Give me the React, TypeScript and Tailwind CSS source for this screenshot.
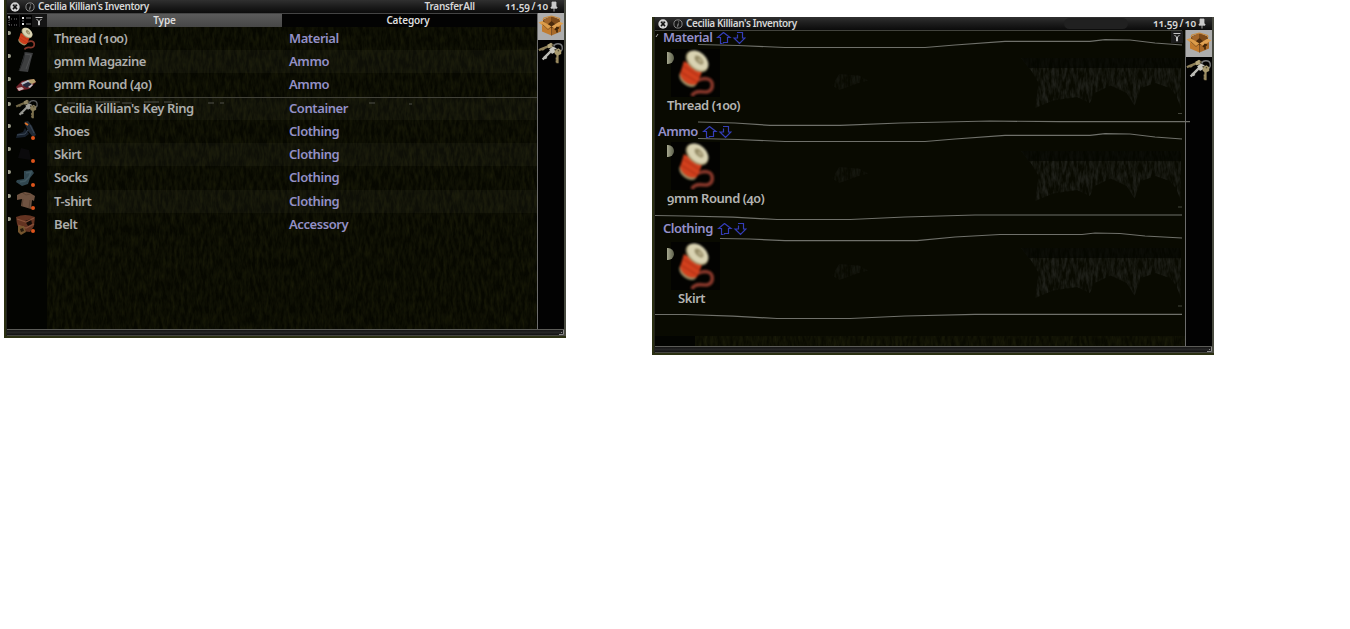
import type { ReactNode } from "react";

const rows = [
  { name: "Thread (100)", category: "Material", icon: "thread", worn: false },
  { name: "9mm Magazine", category: "Ammo", icon: "magazine", worn: false },
  { name: "9mm Round (40)", category: "Ammo", icon: "round", worn: false },
  { name: "Cecilia Killian's Key Ring", category: "Container", icon: "keys", worn: false },
  { name: "Shoes", category: "Clothing", icon: "shoes", worn: true },
  { name: "Skirt", category: "Clothing", icon: "skirt", worn: true },
  { name: "Socks", category: "Clothing", icon: "socks", worn: true },
  { name: "T-shirt", category: "Clothing", icon: "shirt", worn: true },
  { name: "Belt", category: "Accessory", icon: "belt", worn: true },
];

/* Vertical dark-green streaks, like grass seen through the panel. */
function Grass({ id, color }: { id: string; color: "olive" | "grey" }) {
  return (
    <svg className="pointer-events-none absolute inset-0 h-full w-full" aria-hidden="true">
      <filter id={id} x="0" y="0" width="100%" height="100%" colorInterpolationFilters="sRGB">
        <feTurbulence type="fractalNoise" baseFrequency="0.32 0.09" numOctaves="3" seed="7" />
        <feColorMatrix
          values={
            color === "olive"
              ? "0 0 0 0 0.1  0 0 0 0 0.105  0 0 0 0 0.03  1.7 0 0 0 -0.5"
              : "0 0 0 0 0.12  0 0 0 0 0.125  0 0 0 0 0.1  2.4 0 0 0 -0.8"
          }
        />
      </filter>
      <rect width="100%" height="100%" filter={`url(#${id})`} />
    </svg>
  );
}

function Thread({ className }: { className: string }) {
  return (
    <svg viewBox="0 0 48 48" className={className}>
      <path d="M20 47c2-5 7-5 13-4 6 0 8-4 7-9-1-4-6-5-10-4-4 2-7 2-9 0" fill="none" stroke="#87372a" strokeWidth="3.6" />
      <ellipse cx="16" cy="30" rx="10" ry="6.5" transform="rotate(38 16 30)" fill="#9c8f66" />
      <path d="M12 12 30 23l-5 12c-6 3-16-3-17-10z" fill="#d2401d" />
      <path d="m9 23 16 10M11 17l17 11" stroke="#b83517" strokeWidth="1.6" />
      <ellipse cx="25" cy="12.5" rx="13" ry="8.5" transform="rotate(42 25 12.5)" fill="#a39870" />
      <ellipse cx="26" cy="11.5" rx="12" ry="8" transform="rotate(42 26 11.5)" fill="#d9d3b2" />
      <ellipse cx="27" cy="11" rx="5.5" ry="3" transform="rotate(46 27 11)" fill="#948a65" />
      <ellipse cx="28" cy="11.5" rx="2.6" ry="1.3" transform="rotate(46 28 11.5)" fill="#b9b08a" />
    </svg>
  );
}

function Keys({ className }: { className: string }) {
  return (
    <svg viewBox="0 0 28 24" className={className}>
      <path d="M17 5c1-4 8-4 9 0 .5 2 0 4-1 5" fill="none" stroke="#77797a" strokeWidth="1.5" />
      <path d="m13 4-10 4-2 1m4-2 1 2" fill="none" stroke="#8e8059" strokeWidth="2.6" />
      <path d="m10 3 4-2 3 2-2 3-4 1z" fill="#b5a77c" />
      <path d="m15 9-7 7-3 3m2-4 2 3" fill="none" stroke="#bcbcb6" strokeWidth="2.6" />
      <path d="m12 8 4-3 4 2-1 4-4 2z" fill="#c9c8c0" />
      <path d="M21 12v11m0-5h-2m2 3h-2" stroke="#9b8b60" strokeWidth="2.4" />
      <path d="m18 9 4-2 3 2v4l-4 2-3-2z" fill="#a89a6e" />
      <path d="m15 3 1 1m2 4 1 1m3 0v1" stroke="#35311f" strokeWidth="1.4" />
    </svg>
  );
}

function Box() {
  return (
    <svg viewBox="0 0 26 27" className="h-[27px] w-[26px]">
      <path d="m5 7 8.500-4L22 7v5l-8.500 4L5 12z" fill="#4a2a0c" />
      <path d="m5 7 8.500-4v5L9 12z" fill="#a3662a" />
      <path d="M13.500 3 22 7l-4 5-4.500-4z" fill="#7d4a19" />
      <path d="m4 11 9.500 4v7.500L4 18.500z" fill="#c27c2f" />
      <path d="m13.500 15 9.500-4v7.500l-9.500 4z" fill="#a96a28" />
      <path d="M.500 9.500 4.500 8l9 5.500-3.500 3z" fill="#dc9c4a" />
      <path d="m13.500 13.500 8-5 4 2-8.500 5z" fill="#e0a252" />
      <path d="m5 7 1-2 7.500-2M13.500 3l8 2.500.5 2" fill="none" stroke="#c88a3e" strokeWidth="1.2" />
      <path d="M19 19.500v-4.500m-2 2 2-2.500 2 .8" fill="none" stroke="#3f2307" strokeWidth="1.6" />
      <path d="m4.500 11.500 5.500 5 3.500-3v9" fill="none" stroke="#6a3e14" strokeWidth=".7" />
    </svg>
  );
}

function ItemIcon({ kind }: { kind: string }) {
  if (kind === "thread") return <Thread className="h-[23px] w-[23px]" />;
  if (kind === "keys") return <Keys className="h-5 w-7 opacity-80" />;
  return (
    <svg viewBox="0 0 22 22" className="h-[22px] w-[22px]">
      {kind === "magazine" && (
        <>
          <path d="m10 1 8 1-2 7-3 12-9-1 3-10z" fill="#3d3e3f" />
          <path d="m10 3 6 1-2 6-3 8" fill="none" stroke="#505152" />
          <path d="m10 1-2 9-4 10" fill="none" stroke="#252627" />
        </>
      )}
      {kind === "round" && (
        <>
          <path d="m1 13 6-6 12-2 2 3-7 7-11 2z" fill="#6e2028" />
          <path d="m12 6 7-1 2 3-6 3z" fill="#b6a26e" />
          <path d="m6 9 7-3 2 2-7 4z" fill="#b9bac4" />
          <path d="m7 11 6-3 4 2-5 4z" fill="#25283c" />
          <path d="m2 14 5-1 2 2-5 2z" fill="#d3b5b8" />
          <path d="m13 13 4-3 1 1-3 3z" fill="#c9c2c6" />
        </>
      )}
      {kind === "shoes" && (
        <>
          <path d="m9 2 4-1 4 5 4 9-3 2-5-6z" fill="#222b36" />
          <path d="m10 8 4 6-4 3-9 1 1-4 6-2z" fill="#18212c" />
          <path d="m2 15 8-1 3-4m2-5 4 8" fill="none" stroke="#3b4857" />
          <path d="m10 3 3 2" stroke="#df7228" strokeWidth="2" />
        </>
      )}
      {kind === "skirt" && <path d="m6 4 8 2 2 10-13-2z" fill="#0b0a0c" />}
      {kind === "socks" && (
        <>
          <path d="m9 4 8-1 2 3-4 5-2 6-6 2-6-4 1-2 7-1z" fill="#314750" />
          <path d="m11 6 5-1-2 5-4 4-5 1" fill="none" stroke="#425962" strokeWidth="1.5" />
        </>
      )}
      {kind === "shirt" && (
        <>
          <path d="m6 3 4-1 5 1 5 3-1 5-2-1-1 9-10-3 1-7-5 1 0-5z" fill="#6f5341" />
          <path d="m8 3 3 2 4-1M8 9l-1 7m8-6-1 8" fill="none" stroke="#5b4333" />
        </>
      )}
      {kind === "belt" && (
        <>
          <path d="M1 3q9-4 19 0l-1 9-4 6-10-1-3-7z" fill="#633321" />
          <path d="m10 7 6-2 1 5-4 2z" fill="#120b07" />
          <path d="m2 5 9 3 8-4M3 11l8 3 8-4" fill="none" stroke="#87513a" strokeWidth="1.3" />
          <path d="m3 12 6 0 2 6-5 3-3-3z" fill="#75552e" />
          <path d="m5 15 3-1 1 3-3 1z" fill="#261a0c" />
        </>
      )}
    </svg>
  );
}

function Funnel() {
  return (
    <svg viewBox="0 0 12 12" className="h-3 w-3">
      <path d="M2.500 2.500h7M3.500 4l2 2V10h1V6l2-2" fill="none" stroke="#c4c4c4" strokeWidth="1" />
    </svg>
  );
}

function TitleBar({ transfer }: { transfer: boolean }) {
  return (
    <div className="flex h-[13px] items-center bg-linear-to-b from-[#303030] via-[#1c1c1c] to-[#0b0b0b] pl-[3px] text-[10px] leading-[11px] font-semibold tracking-[-0.4px] text-[#d6d6d6]">
      <svg viewBox="0 0 10 10" className="h-[10px] w-[10px]">
        <circle cx="5" cy="5" r="4.7" fill="#d2d2d2" />
        <path d="m3 2.7 4 4.4m0-4.4-4 4.4" stroke="#111" strokeWidth="1.6" />
        <path d="M4.2 2.5h1.6" stroke="#777" />
      </svg>
      <svg viewBox="0 0 10 10" className="ml-[5px] h-[10px] w-[10px]">
        <circle cx="5" cy="5" r="4.1" fill="#161616" stroke="#929292" strokeWidth=".9" />
        <path d="M5.7 2.4v1M5.3 4.4 4.6 7.6" stroke="#a5a5a5" />
      </svg>
      <span className="ml-[3px] whitespace-nowrap">Cecilia Killian's Inventory</span>
      <span className="flex-1" />
      {transfer ? (
        <span className="mr-[30px] tracking-[-0.25px] whitespace-nowrap [word-spacing:-2px]">Transfer All</span>
      ) : (
        <span className="mr-[25px] h-[11px] w-16 rounded-lg bg-[#202020]" />
      )}
      <span className="tracking-[-0.1px] whitespace-nowrap [word-spacing:-1px]">11.59 / 10</span>
      <svg viewBox="0 0 8 11" className="mr-[6px] ml-[2px] h-[11px] w-2">
        <path d="M2 1h4v5H2zM1 6h6v1.2H1zM4 7v3.5" fill="#c9c9c9" stroke="#c9c9c9" strokeWidth=".8" />
      </svg>
    </div>
  );
}

function Sidebar() {
  return (
    <div className="flex w-[27px] shrink-0 flex-col border-l border-[#6c6c6c] bg-[#020202]">
      <div className="bg-[#adadad]">
        <Box />
      </div>
      <div className="pt-px">
        <Keys className="h-6 w-[26px]" />
      </div>
    </div>
  );
}

function Frame({ transfer, children }: { transfer: boolean; children: ReactNode }) {
  return (
    <div className="flex h-[338px] w-[562px] flex-col border-b-2 border-l-2 border-[#2b3012] bg-[#070801]">
      <div className="flex min-h-0 flex-1 flex-col border-r-2 border-l border-r-[#484a40] border-l-[#22231c]">
        <TitleBar transfer={transfer} />
        <div className="flex min-h-0 flex-1">
          {children}
          <Sidebar />
        </div>
        <div className="flex h-[7px] justify-end border-t border-b border-t-[#5b5b57] border-b-[#44443f] bg-linear-to-b from-[#151515] via-[#252525] to-[#111]">
          <svg viewBox="0 0 6 5" className="h-[5px] w-[6px]">
            <path d="M5.5 0v4.5H1M3.5 2v1" fill="none" stroke="#969696" strokeWidth=".9" />
          </svg>
        </div>
      </div>
    </div>
  );
}

function ListWindow() {
  return (
    <Frame transfer>
      <div className="relative flex min-w-0 flex-1 flex-col border-t border-[#444]">
        <div className="absolute inset-y-0 right-0 left-10 opacity-90">
          <Grass id="grass-list" color="olive" />
        </div>
        <div className="relative flex h-[13px] text-[10px] leading-[12px] font-semibold tracking-[-0.15px] text-[#dedede]">
          <div className="flex w-10 items-center gap-px bg-[#151515]">
            <svg viewBox="0 0 12 12" className="h-3 w-3 bg-black">
              <path d="M2 1v9M2 4h4M2 10h4M7 4h4M7 10h4" fill="none" stroke="#777" strokeDasharray="1 1" />
              <path d="M1 2h2" stroke="#ccc" strokeWidth="1.5" />
            </svg>
            <svg viewBox="0 0 12 12" className="h-3 w-3 bg-black">
              <path d="M2 3h2M2 9h2" stroke="#e4e4e4" strokeWidth="2" />
              <path d="M6 3h5M6 9h5M3 5v2" stroke="#777" />
            </svg>
            <Funnel />
          </div>
          <div className="w-[235px] bg-linear-to-b from-[#5a5a5a] to-[#474747] text-center">Type</div>
          <div className="flex-1 bg-[#030303] pr-[3px] text-center">Category</div>
        </div>
        <div className="relative flex flex-1 flex-col">
          <div className="absolute inset-y-0 left-0 w-10 bg-[#030401]" />
          {rows.map((row, i) => (
            <div
              key={row.name}
              className={`relative -top-[0.4px] flex h-[23.3px] items-center text-[13px] font-semibold tracking-[-0.42px] ${i === 3 ? "border-t border-[#414139]" : ""}`}
            >
              <div className={`flex h-full w-10 items-center ${row.icon === "keys" ? "pl-[6px]" : "pl-2"}`}>
                <ItemIcon kind={row.icon} />
              </div>
              <span className="absolute top-[4px] left-px h-1 w-[3px] rounded-r-sm bg-[#9c9d88]" />
              {row.worn && <span className="absolute bottom-[3px] left-6 h-1 w-1 rounded-full bg-[#dd541b]" />}
              <div className={`flex h-full flex-1 items-center ${i % 2 === 1 ? "bg-[#a0a28a]/5" : ""}`}>
                <span className="w-[235px] pl-[7px] whitespace-nowrap text-[#adadab]">{row.name}</span>
                <span className="pl-[7px] text-[#9390c7]">{row.category}</span>
              </div>
            </div>
          ))}
          <svg viewBox="0 0 530 10" className="pointer-events-none absolute top-[71px] left-0 h-[10px] w-full">
            <path d="M60 5h8m20-1h25m2 1h10m12-1h15m5 0h8m36 1h6m6 0h4m145 0h6m34 1h3" fill="none" stroke="#50504a" />
          </svg>
        </div>
      </div>
    </Frame>
  );
}

function SortArrows() {
  return (
    <svg viewBox="0 0 30 14" className="h-[14px] w-[30px]">
      <path
        d="M7.5 1.5 1.5 6.5H4.5V12.5H6.5M7.5 1.5 14 6.5H11.5V11.5H7.5V12.5M21 1.5H26.5V7H29L23.5 12.5 18 7H21.5V3.5"
        fill="none"
        stroke="#343db8"
        strokeWidth="1.2"
      />
    </svg>
  );
}

function Section({
  id,
  title,
  item,
  className,
  headingClass,
  bodyClass,
  chevronClass,
  labelClass,
  children,
}: {
  id: string;
  title: string;
  item: string;
  className: string;
  headingClass: string;
  bodyClass: string;
  chevronClass: string;
  labelClass: string;
  children?: ReactNode;
}) {
  return (
    <section className={`relative ${className}`}>
      {children}
      <div className={`flex h-4 items-center gap-[4px] text-[13px] font-semibold tracking-[-0.48px] text-[#9490ca] ${headingClass}`}>
        <h2>{title}</h2>
        <SortArrows />
      </div>
      <div className={`relative ${bodyClass}`}>
        <div className="ml-4 h-12 w-[49px] overflow-hidden bg-[#030301]">
          <Thread className="ml-px h-12 w-12 blur-[0.8px]" />
        </div>
        <span className={`absolute left-3 h-3 w-[7px] rounded-r-full bg-linear-to-r from-[#a7a98f] to-[#5d604b] ${chevronClass}`} />
        <p className={`h-4 text-[13px] leading-4 font-semibold tracking-[-0.44px] text-[#b4b4b2] ${labelClass}`}>{item}</p>
      </div>
      <div className="absolute top-[28px] right-1 h-[50px] w-[160px] [clip-path:polygon(0_0,100%_0,100%_100%,97%_75%,93%_60%,84%_50%,75%_60%,71%_95%,66%_70%,56%_55%,46%_70%,43%_90%,35%_78%,20%_85%,9%_100%,11%_50%,7%_28%)]">
        <Grass id={id} color="grey" />
        <div className="absolute inset-x-0 top-0 h-[10px] bg-[#040500]/70" />
      </div>
      <div className="absolute top-[44px] left-[177px] h-4 w-9 opacity-60 [clip-path:polygon(20%_0,75%_10%,100%_40%,70%_60%,20%_100%,0_70%)]">
        <Grass id={`${id}-tuft`} color="grey" />
      </div>
    </section>
  );
}

/* Hand-drawn divider strokes, in window coordinates of the content pane. */
function Dividers() {
  return (
    <svg viewBox="0 0 535 317" className="pointer-events-none absolute top-0 left-0 h-[317px] w-[535px] overflow-visible">
      <g fill="none" stroke="#6f706a" strokeWidth="1.2">
        <path d="M0 .5H527" stroke="#42433d" />
        <path d="M43 14.5 83 15.5 130 17.5H270L300 15 350 11.3H435L450 9.7 475 10 500 13 527 15" />
        <path d="M43 92 80 93 115 95.3H185L245 93 335 91 405 91.7H535" />
        <path d="M43 108.5 83 109.5 130 111.5H270L300 109 350 105.3H435L450 103.7 475 104 500 107 527 109" />
        <path d="M0 185.5 30 186 78 187.2 122 189.5H195L250 187 320 185H527" />
        <path d="M65 208.5 95 209 130 210.6H262L300 207 345 204.5H427L440 203 465 203.5 490 206 527 208" />
        <path d="M0 284.5H30L78 286.2 122 288.5H195L250 286 320 284.3H527" />
      </g>
      <path d="M1 7 3 4" stroke="#aaa" />
      <path d="M523 83.5h4M523 177h4M523 276h4" stroke="#45463c" />
    </svg>
  );
}

function GroupedWindow() {
  return (
    <Frame transfer={false}>
      <main className="relative flex min-w-0 flex-1 flex-col bg-[#090a01]">
        <Section
          id="g1"
          title="Material"
          item="Thread (100)"
          className="h-[93px]"
          headingClass="pl-2"
          bodyClass="pt-[3px]"
          chevronClass="top-[6px]"
          labelClass="pl-3"
        >
          <span className="absolute top-px right-[2px] z-10 bg-[#1c1c1c]">
            <Funnel />
          </span>
        </Section>
        <Section
          id="g2"
          title="Ammo"
          item="9mm Round (40)"
          className="h-[97px]"
          headingClass="pl-[3px] pt-px"
          bodyClass="pt-[3px]"
          chevronClass="top-[6px]"
          labelClass="pl-3"
        />
        <Section
          id="g3"
          title="Clothing"
          item="Skirt"
          className="h-[116px]"
          headingClass="pl-2 pt-px"
          bodyClass="pt-[6px]"
          chevronClass="top-[12px]"
          labelClass="pl-[23px]"
        />
        <div className="relative flex-1">
          <Grass id="grass-foot" color="olive" />
          <div className="absolute inset-y-0 left-0 w-10 bg-[#030401]" />
        </div>
        <Dividers />
      </main>
    </Frame>
  );
}

export default function App() {
  return (
    <div className="flex h-[629px] w-[1350px] items-start gap-[86px] overflow-hidden bg-white pl-1 font-['Noto_Sans',sans-serif] oldstyle-nums">
      <ListWindow />
      <div className="pt-[17px]">
        <GroupedWindow />
      </div>
    </div>
  );
}
